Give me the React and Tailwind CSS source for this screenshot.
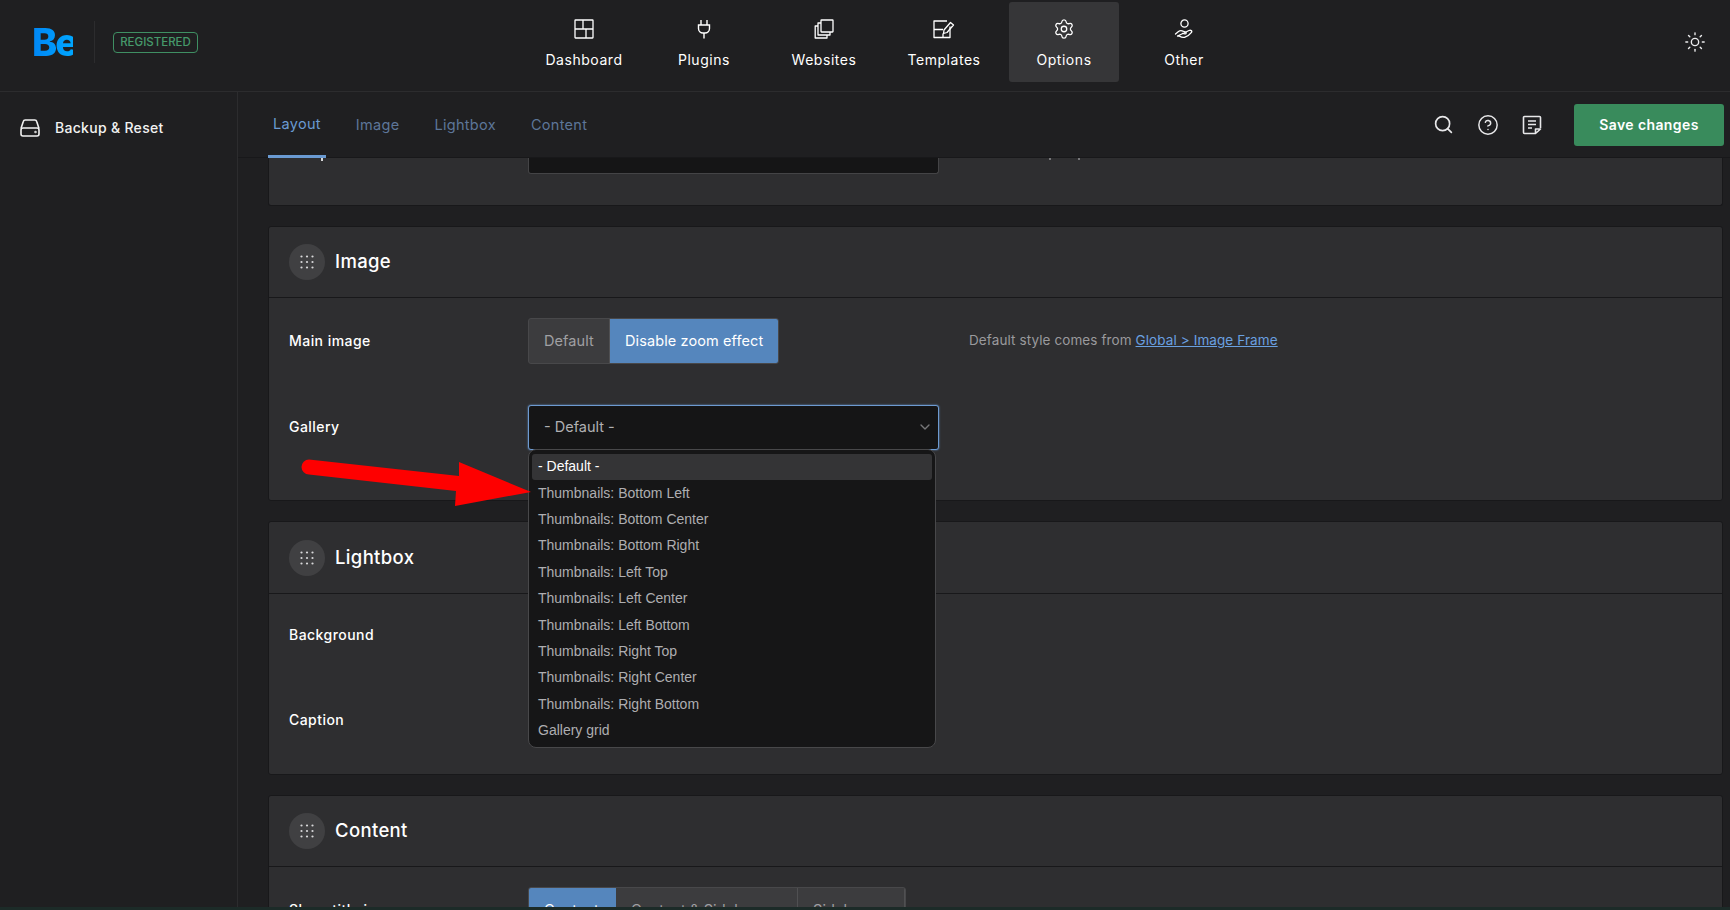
import React from 'react';
import { Settings, Sun, Search, CircleHelp, ChevronDown } from 'lucide-react';

// Top nav icons, drawn to follow the reference strokes
const DashboardIcon = () => (
    <svg width="20" height="20" viewBox="0 0 20 20" fill="none" stroke="currentColor" strokeWidth="1.3">
        <rect x="1" y="1" width="18" height="18" rx="0.5" />
        <path d="M1 10h18M9 1v9M12 10v9" />
    </svg>
);

const PluginsIcon = () => (
    <svg width="20" height="20" viewBox="0 0 20 20" fill="none" stroke="currentColor" strokeWidth="1.4">
        <path d="M7 1v5M13 1v5M4.5 6h11v3.5a4.5 4.5 0 0 1-4.5 4.5H9a4.5 4.5 0 0 1-4.5-4.5zM10 14v5.5" />
    </svg>
);

const WebsitesIcon = () => (
    <svg width="20" height="20" viewBox="0 0 20 20" fill="none" stroke="currentColor" strokeWidth="1.3" strokeLinejoin="round">
        <rect x="7" y="1" width="12" height="12" rx="0.5" />
        <path d="M7 4H4v12h12v-3" />
        <path d="M4 7H1.2v12H13v-3" />
    </svg>
);

const TemplatesIcon = () => (
    <svg width="22" height="20" viewBox="0 0 22 20" fill="none" stroke="currentColor" strokeWidth="1.3" strokeLinejoin="round">
        <path d="M17 7.5V18.5H1V2h13" />
        <path d="M1 10.5h9M10 18.5v-4" />
        <path d="M10.5 14.5l.5-3.5 6.5-7.5 3 2.5-6.5 7.5z" />
    </svg>
);

const OtherIcon = () => (
    <svg width="20" height="20" viewBox="0 0 20 20" fill="none" stroke="currentColor" strokeWidth="1.3" strokeLinejoin="round" strokeLinecap="round">
        <circle cx="10.5" cy="4.5" r="3.6" />
        <path d="M1.5 15l3-2.5c1.5-1 3-1 4.5-.3l2.5.8c1.2.4.8 2-.5 1.8l-2.5-.4" />
        <path d="M10 14l5-2.5c1.8-.8 3.5.5 2.5 1.8-1.5 2-4 4-7 5-2 .6-3.500-.2-5-1.200L3.500 17z" />
    </svg>
);

const NoteIcon = () => (
    <svg width="20" height="20" viewBox="0 0 20 20" fill="none" stroke="currentColor" strokeWidth="1.6" strokeLinejoin="round">
        <path d="M13 18.500H2.500a1 1 0 0 1-1-1V2.500a1 1 0 0 1 1-1h15a1 1 0 0 1 1 1V13" />
        <path d="M6 6h8M6 9.500h8M6 13h4" />
        <path d="M13.500 18.500V14h5z" />
    </svg>
);

const DriveIcon = () => (
    <svg width="20" height="18" viewBox="0 0 20 18" fill="none" stroke="currentColor" strokeWidth="1.6" strokeLinejoin="round">
        <path d="M1 9.500l2.300-7A2 2 0 0 1 5.200 1h9.600a2 2 0 0 1 1.900 1.500l2.300 7" />
        <rect x="1" y="9" width="18" height="8" rx="2" />
        <circle cx="15.500" cy="13" r="0.4" fill="currentColor" />
    </svg>
);

const DotsIcon = () => (
    <svg width="14" height="14" viewBox="0 0 14 14" fill="#d8d8da">
        {[1.5, 7, 12.5].map((y) =>
            [1.5, 7, 12.5].map((x) => <circle key={`${x}-${y}`} cx={x} cy={y} r="1.1" />)
        )}
    </svg>
);

const navItems = [
    { label: 'Dashboard', icon: <DashboardIcon /> },
    { label: 'Plugins', icon: <PluginsIcon /> },
    { label: 'Websites', icon: <WebsitesIcon /> },
    { label: 'Templates', icon: <TemplatesIcon /> },
    { label: 'Options', icon: <Settings size={22} strokeWidth={1.4} />, active: true },
    { label: 'Other', icon: <OtherIcon /> },
];

const galleryOptions = [
    'Thumbnails: Bottom Left',
    'Thumbnails: Bottom Center',
    'Thumbnails: Bottom Right',
    'Thumbnails: Left Top',
    'Thumbnails: Left Center',
    'Thumbnails: Left Bottom',
    'Thumbnails: Right Top',
    'Thumbnails: Right Center',
    'Thumbnails: Right Bottom',
    'Gallery grid',
];

const PanelHeader = ({ title, heightClass }) => (
    <div className={`flex items-center gap-[10px] pl-5 border-b border-[#18181a] ${heightClass}`}>
        <span className="flex h-9 w-9 items-center justify-center rounded-full bg-[#404042]">
            <DotsIcon />
        </span>
        <h3 className="text-[18.5px] font-medium text-white tracking-[0.35px]">{title}</h3>
    </div>
);

const Label = ({ children }) => (
    <div className="w-[239px] shrink-0 pb-[2px] text-[14px] font-medium text-white tracking-[0.45px]">{children}</div>
);

const Toggle = ({ items }) => (
    <div className="flex h-[46px] rounded-[3px] overflow-hidden border border-[#48484a] bg-[#3c3c3e] text-[14.5px] tracking-[0.1px]">
        {items.map((item) => (
            <span
                key={item.label}
                className={`flex items-center justify-start pl-[15px] ${item.width} ${item.active ? 'bg-[#5586bd] text-white' : 'text-[#a0a0a3] border-r border-[#505052]'}`}
            >
                {item.label}
            </span>
        ))}
    </div>
);

const GallerySelect = () => (
    <div className="relative w-[411px]">
        <div className="flex h-[45px] items-center justify-between rounded-[3px] border border-[#6d9ad0] bg-[#151516] pb-[1px] pl-[15px] pr-[5px] text-[14.5px] text-[#b0b0b3] shadow-[0_0_2px_#6d9ad0]">
            <span>- Default -</span>
            <ChevronDown size={16} className="text-[#77777a]" />
        </div>
        {/* open native list */}
        <div className="absolute left-0 top-[44px] z-20 h-[299px] w-[408px] rounded-lg border border-[#48484a] bg-[#161617] p-[3px] pt-[3.5px] font-[Arial,sans-serif] text-[14px] text-[#aeaeb1]">
            <div className="flex h-[26.4px] items-center rounded-[3px] bg-[#343436] px-[6px] text-white">- Default -</div>
            {galleryOptions.map((opt) => (
                <div key={opt} className="flex h-[26.4px] items-center px-[6px]">{opt}</div>
            ))}
        </div>
    </div>
);

const App = () => {
    return (
        <div className="flex h-[910px] w-[1730px] flex-col overflow-hidden bg-[#1f1f21] text-white font-[Inter,sans-serif]">
            {/* TOP BAR */}
            <header className="flex h-[92px] shrink-0 border-b border-[#2c2c2e]">
                <div className="flex w-[529px] items-center pl-[32px] pb-[7px]">
                    <span className="w-[41px] bg-gradient-to-r from-[#0086f5] to-[#00a6ff] bg-clip-text text-[38px] font-extrabold leading-none tracking-[-0.05em] text-transparent">Be</span>
                    <span className="ml-[21px] h-[42px] w-px bg-[#2c2c2e]" />
                    <span className="ml-[18px] mt-[1px] flex h-[21px] w-[85px] items-center justify-center rounded-[4px] border border-[#3f8f63] text-[11.5px] font-medium text-[#46996b]">REGISTERED</span>
                </div>
                <nav className="flex gap-[10px] pt-[2px]">
                    {navItems.map((item) => (
                        <div
                            key={item.label}
                            className={`flex h-[80px] w-[110px] flex-col items-center rounded-[3px] pt-[16px] text-[14px] tracking-[0.55px] ${item.active ? 'bg-[#363638]' : ''}`}
                        >
                            <span className="flex h-[21px] items-center justify-center">{item.icon}</span>
                            <span className="mt-[11px] leading-5">{item.label}</span>
                        </div>
                    ))}
                </nav>
                <div className="ml-auto pr-[24px] pt-[31px] text-[#ececee]">
                    <Sun size={22} strokeWidth={1.5} />
                </div>
            </header>

            <div className="flex min-h-0 flex-1">
                {/* SIDEBAR */}
                <aside className="w-[238px] shrink-0 border-r border-[#2c2c2e] pl-[20px] pt-[25px]">
                    <div className="flex items-center gap-[15px] text-[14px] font-medium tracking-[0.3px] text-[#f2f2f2]">
                        <DriveIcon />
                        <span>Backup &amp; Reset</span>
                    </div>
                </aside>

                <main className="flex min-w-0 flex-1 flex-col">
                    {/* TABS */}
                    <div className="flex h-[66px] shrink-0 items-stretch border-b border-[#18181a] pl-[30px] pr-[6px]">
                        <div className="flex gap-[25px] text-[14.5px] tracking-[0.3px] text-[#5d7699]">
                            <span className="-mb-px flex items-center border-b-[3px] border-[#6a9ad2] px-[5px] pt-[1px] text-[#6a9ad2]">Layout</span>
                            <span className="flex items-center px-[5px]">Image</span>
                            <span className="flex items-center px-[5px]">Lightbox</span>
                            <span className="flex items-center px-[5px]">Content</span>
                        </div>
                        <div className="ml-auto flex items-center text-[#e8e8ea]">
                            <Search size={21} strokeWidth={1.9} className="mr-[23px]" />
                            <CircleHelp size={22} strokeWidth={1.6} className="mr-[23px]" />
                            <NoteIcon />
                            <button className="ml-[32px] h-[42px] w-[150px] rounded-[3px] bg-[#398b5c] text-[14px] font-semibold tracking-[0.4px] text-white">Save changes</button>
                        </div>
                    </div>

                    {/* OPTIONS */}
                    <div className="min-h-0 flex-1 overflow-hidden pl-[30px] pr-[7px]">
                        {/* first panel is scrolled under the tab bar */}
                        <section className="relative h-[48px] rounded-b-[3px] border-x border-b border-[#18181a] bg-[#2e2e30]">
                            <div className="ml-[259px] h-[16px] w-[411px] rounded-b-[3px] border-x border-b border-[#444446] bg-[#151516]" />
                            <span className="absolute left-[52px] top-0 h-[3px] w-[2px] bg-[#d8d8da]" />
                            <span className="absolute left-[780px] top-0 h-[2px] w-[2px] bg-[#77777a]" />
                            <span className="absolute left-[809px] top-0 h-[2px] w-[2px] bg-[#77777a]" />
                        </section>

                        <section className="mt-[20px] h-[275px] rounded-[3px] border border-[#18181a] bg-[#2e2e30]">
                            <PanelHeader title="Image" heightClass="h-[71px]" />
                            <div className="flex items-center pl-5 pt-[20px]">
                                <Label>Main image</Label>
                                <Toggle items={[{ label: 'Default', width: 'w-[81px]' }, { label: 'Disable zoom effect', width: 'w-[168px]', active: true }]} />
                                <p className="ml-[190px] pb-[2px] text-[13.5px] tracking-[0.1px] text-[#9a9a9d]">
                                    Default style comes from <a className="text-[#6aa0e0] underline">Global &gt; Image Frame</a>
                                </p>
                            </div>
                            <div className="flex items-center pl-5 pt-[41px]">
                                <Label>Gallery</Label>
                                <GallerySelect />
                            </div>
                        </section>

                        <section className="mt-[20px] h-[254px] rounded-[3px] border border-[#18181a] bg-[#2e2e30]">
                            <PanelHeader title="Lightbox" heightClass="h-[72px]" />
                            <div className="flex h-[46px] items-center pl-5 mt-[18px]">
                                <Label>Background</Label>
                            </div>
                            <div className="flex h-[46px] items-center pl-5 mt-[39px]">
                                <Label>Caption</Label>
                            </div>
                        </section>

                        <section className="mt-[20px] rounded-[3px] border border-[#18181a] bg-[#2e2e30]">
                            <PanelHeader title="Content" heightClass="h-[71px]" />
                            <div className="flex items-center pl-5 pt-[20px]">
                                <Label>Show title in</Label>
                                <Toggle items={[
                                    { label: 'Content', width: 'w-[87px]', active: true },
                                    { label: 'Content & Sidebars', width: 'w-[182px]' },
                                    { label: 'Sidebars', width: 'w-[107px]' },
                                ]} />
                            </div>
                        </section>
                    </div>
                </main>
            </div>

            <div className="h-[3px] shrink-0 bg-[#1c2b28]" />

            {/* annotation arrow pasted on the screenshot */}
            <svg className="pointer-events-none absolute left-0 top-0 z-30" width="1730" height="910" fill="#fe0000">
                <path d="M309 459.500 L459 476 L459 462 L531 492 L455 506 L456 491 L309 474.500 A7.500 7.500 0 0 1 309 459.500 Z" />
            </svg>
        </div>
    );
};

export default App;
